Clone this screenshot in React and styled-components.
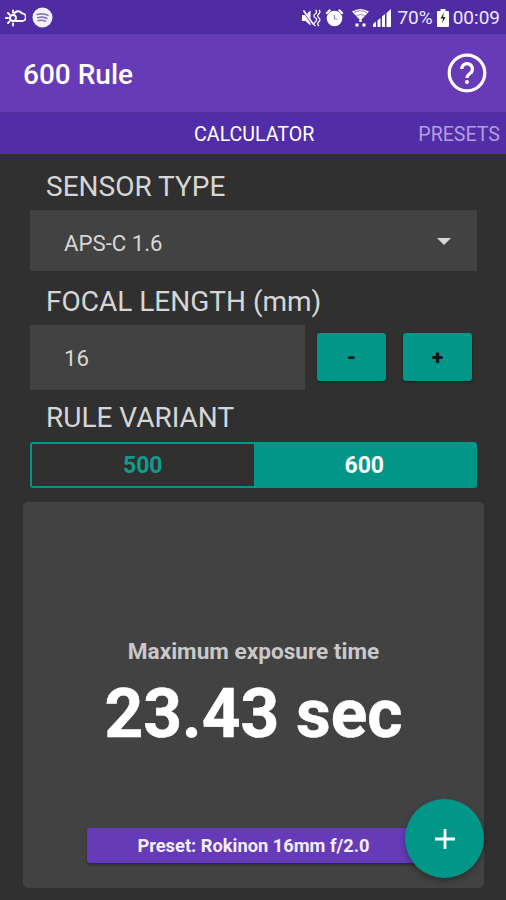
import React from "react";
import styled, { createGlobalStyle } from "styled-components";

const GlobalStyle = createGlobalStyle`
  html, body {
    margin: 0;
    padding: 0;
    background: #303030;
  }
  * {
    box-sizing: border-box;
  }
`;

const Screen = styled.div`
  width: 506px;
  height: 900px;
  overflow: hidden;
  display: flex;
  flex-direction: column;
  background: #303030;
  font-family: Roboto, "Liberation Sans", sans-serif;
`;

const StatusBar = styled.div`
  height: 34px;
  display: flex;
  align-items: center;
  justify-content: space-between;
  padding: 1px 6px 0 5px;
  background: #4f2ca3;
  color: #fff;
`;

const StatusGroup = styled.div`
  display: flex;
  align-items: center;
  gap: ${(p) => p.$gap || 4}px;
`;

const StatusText = styled.span`
  margin-left: ${(p) => p.$left || 0}px;
  font-size: 19px;
  line-height: 20px;
  color: #eee9f8;
`;

const Toolbar = styled.div`
  height: 79px;
  display: flex;
  align-items: center;
  justify-content: space-between;
  padding: 0 19px 0 23px;
  background: #673ab7;
  border-bottom: 1px solid #55309f;
`;

const AppTitle = styled.div`
  margin-top: 3px;
  color: #fff;
  font-size: 28px;
  font-weight: 500;
`;

const Tabs = styled.div`
  height: 41px;
  display: flex;
  align-items: center;
  justify-content: flex-end;
  gap: 104px;
  padding: 2px 6px 0 0;
  background: #512da8;
`;

const Tab = styled.div`
  font-size: 19.6px;
  font-weight: 400;
  color: ${(p) => (p.$active ? "#fff" : "#b39ddb")};
`;

const Content = styled.div`
  flex: 1;
  display: flex;
  flex-direction: column;
  padding: 0 22px 12px 23px;
  position: relative;
`;

const Form = styled.div`
  display: flex;
  flex-direction: column;
  padding: 0 7px;
`;

const FieldLabel = styled.div`
  height: ${(p) => p.$height}px;
  display: flex;
  align-items: center;
  padding: ${(p) => p.$top}px 0 0 16px;
  font-size: 28px;
  color: #d6d6d6;
`;

const SelectBox = styled.div`
  height: 61px;
  display: flex;
  align-items: center;
  justify-content: space-between;
  padding: 4px 26px 0 34px;
  background: #424242;
  color: #d6d6d6;
  font-size: 22.2px;
`;

const Caret = styled.div`
  width: 0;
  height: 0;
  margin-top: -3px;
  border-left: 7px solid transparent;
  border-right: 7px solid transparent;
  border-top: 7px solid #d8d8d8;
`;

const StepperRow = styled.div`
  display: flex;
  align-items: center;
`;

const NumberInput = styled.div`
  width: 275px;
  height: 65px;
  display: flex;
  align-items: center;
  padding: 1px 0 0 34px;
  background: #424242;
  color: #d6d6d6;
  font-size: 22.2px;
`;

const StepButton = styled.div`
  width: 69px;
  height: 48px;
  margin: 0 0 1px ${(p) => p.$gap}px;
  display: flex;
  align-items: center;
  justify-content: center;
  background: #009688;
  border-radius: 3px;
  box-shadow: 0 1px 2px rgba(0, 0, 0, 0.45);
  color: #111;
  font-size: 21px;
  font-weight: 900;
`;

const Toggle = styled.div`
  height: 46px;
  display: flex;
  border: 2px solid #009688;
  border-radius: 3px;
  font-size: 23px;
  font-weight: 700;
`;

const ToggleOption = styled.div`
  flex: 1;
  display: flex;
  align-items: center;
  justify-content: center;
  background: ${(p) => (p.$active ? "#009688" : "transparent")};
  color: ${(p) => (p.$active ? "#fff" : "#0f9c8e")};
`;

const ResultCard = styled.div`
  height: 386px;
  margin-top: 14px;
  display: flex;
  flex-direction: column;
  align-items: center;
  padding-top: 136px;
  background: #424242;
  border-radius: 5px;
`;

const ResultLabel = styled.div`
  height: 28px;
  line-height: 28px;
  color: #c9c9c9;
  font-size: 22.6px;
  font-weight: 700;
`;

const ResultValue = styled.div`
  height: 72px;
  margin-top: 12px;
  line-height: 72px;
  color: #fff;
  font-size: 67.6px;
  font-weight: 700;
  -webkit-text-stroke: 0.6px #fff;
`;

const PresetBadge = styled.div`
  width: 333px;
  height: 35px;
  margin-top: auto;
  margin-bottom: 25px;
  display: flex;
  align-items: center;
  justify-content: center;
  background: #673ab7;
  border-radius: 3px;
  box-shadow: 0 2px 3px rgba(0, 0, 0, 0.35);
  color: #f3effa;
  font-size: 18.3px;
  font-weight: 700;
`;

const Fab = styled.div`
  position: absolute;
  right: 22px;
  bottom: 22px;
  width: 79px;
  height: 79px;
  display: flex;
  align-items: center;
  justify-content: center;
  border-radius: 50%;
  background: #009688;
  box-shadow: 0 3px 6px rgba(0, 0, 0, 0.3);
`;

const WifiSlot = styled.span`
  display: flex;
  margin-left: 4px;
`;

function CloudSunIcon() {
  return (
    <svg width="21" height="18" viewBox="0 0 21 18" fill="none" stroke="#fff" strokeWidth="1.9">
      <path d="M9 5a4.5 4.5 0 0 1 8-.6 3.600 3.600 0 0 1 0 7.600H9.500" />
      <circle cx="8" cy="9" r="3" />
      <path d="M1 9h2M3 4l1.500 1.500M8 1.500v2M3 14l1.500-1.500M8 14.500v2" strokeLinecap="round" />
    </svg>
  );
}

function SpotifyIcon() {
  return (
    <svg width="21" height="21" viewBox="0 0 21 21">
      <circle cx="10.500" cy="10.500" r="10" fill="#f4f2fa" />
      <path d="M5 7.500c3.500-1 7.500-.8 11 .8M5.600 10.700c3-.8 6.300-.6 9.200.7M6.200 13.600c2.500-.6 5-.4 7.300.6" fill="none" stroke="#8a78bd" strokeWidth="1.700" strokeLinecap="round" />
    </svg>
  );
}

function MuteIcon() {
  return (
    <svg width="19" height="18" viewBox="0 0 19 18" fill="#fff">
      <path d="M0 6h3.500L8.500 1.500v15L3.500 12H0z" />
      <path d="M1 1l11 16" stroke="#4f2ca3" strokeWidth="2.400" />
      <path d="M1.500 1.500l10 14" stroke="#fff" strokeWidth="1.600" />
      <path d="M13.500 1q2.500 2-.3 4t.3 4q2.500 2-.3 4t.3 4M17 1q2 2-.3 4t.3 4q2 2-.3 4t.3 4" fill="none" stroke="#fff" strokeWidth="1.300" />
    </svg>
  );
}

function AlarmIcon() {
  return (
    <svg width="19" height="19" viewBox="0 0 19 19" fill="#fff">
      <circle cx="9.500" cy="10.500" r="7.800" />
      <path d="M.5 5l4-4 1.500 1.500-4 4zM18.500 5l-4-4-1.500 1.500 4 4z" />
      <path d="M9.500 7v4h3" fill="none" stroke="#9a88c8" strokeWidth="1.200" />
    </svg>
  );
}

function WifiIcon() {
  return (
    <svg width="17" height="19" viewBox="0 0 17 19" fill="#fff">
      <path d="M0 3.500Q8.500-1.500 17 3.500L10 11H7z" />
      <path d="M2 4.500Q8.500 1 15 4.500M4.500 7.500Q8.500 5.500 12.500 7.500" fill="none" stroke="#8a74bb" strokeWidth="0.900" />
      <circle cx="8.500" cy="12.500" r="1.500" />
      <path d="M3.500 15.500h3v3h-3zM10.500 15.500h3v3h-3z" />
    </svg>
  );
}

function SignalIcon() {
  return (
    <svg width="18" height="18" viewBox="0 0 18 18" fill="#fff">
      <path d="M0 15l3-2.500V18H0zM4.500 11.500L7.500 9v9h-3zM9 7.500L12 5v13H9zM13.500 4L18 0v18h-4.500z" />
    </svg>
  );
}

function BatteryIcon() {
  return (
    <svg width="12" height="18" viewBox="0 0 12 18">
      <path d="M3.500 0h5v2H11a1 1 0 0 1 1 1v14a1 1 0 0 1-1 1H1a1 1 0 0 1-1-1V3a1 1 0 0 1 1-1h2.500z" fill="#fff" />
      <path d="M7 3.500L3.500 9.500H6l-1 5 3.500-6.500H6z" fill="#222" />
    </svg>
  );
}

function HelpIcon() {
  return (
    <svg width="40" height="40" viewBox="0 0 40 40" fill="none" stroke="#fff" strokeWidth="3.200">
      <circle cx="20" cy="20" r="17.800" />
      <path d="M14.800 16a5.300 5.300 0 1 1 8.400 4.300c-2.100 1.500-3.200 2.300-3.200 4.700" />
      <circle cx="20" cy="29" r="2" fill="#fff" stroke="none" />
    </svg>
  );
}

function PlusIcon() {
  return (
    <svg width="22" height="22" viewBox="0 0 22 22" stroke="#fff" strokeWidth="2.800">
      <path d="M11 1v20M1 11h20" />
    </svg>
  );
}

export default function App() {
  return (
    <Screen>
      <GlobalStyle />
      <StatusBar>
        <StatusGroup $gap={6}>
          <CloudSunIcon />
          <SpotifyIcon />
        </StatusGroup>
        <StatusGroup>
          <MuteIcon />
          <AlarmIcon />
          <WifiSlot>
            <WifiIcon />
          </WifiSlot>
          <SignalIcon />
          <StatusText $left={2}>70%</StatusText>
          <BatteryIcon />
          <StatusText>00:09</StatusText>
        </StatusGroup>
      </StatusBar>
      <Toolbar>
        <AppTitle>600 Rule</AppTitle>
        <HelpIcon />
      </Toolbar>
      <Tabs>
        <Tab $active>CALCULATOR</Tab>
        <Tab>PRESETS</Tab>
      </Tabs>
      <Content>
        <Form>
          <FieldLabel $height={56} $top={8}>SENSOR TYPE</FieldLabel>
          <SelectBox>
            APS-C 1.6
            <Caret />
          </SelectBox>
          <FieldLabel $height={54} $top={6}>FOCAL LENGTH (mm)</FieldLabel>
          <StepperRow>
            <NumberInput>16</NumberInput>
            <StepButton $gap={12}>-</StepButton>
            <StepButton $gap={17}>+</StepButton>
          </StepperRow>
          <FieldLabel $height={52} $top={3}>RULE VARIANT</FieldLabel>
          <Toggle>
            <ToggleOption>500</ToggleOption>
            <ToggleOption $active>600</ToggleOption>
          </Toggle>
        </Form>
        <ResultCard>
          <ResultLabel>Maximum exposure time</ResultLabel>
          <ResultValue>23.43 sec</ResultValue>
          <PresetBadge>Preset: Rokinon 16mm f/2.0</PresetBadge>
        </ResultCard>
        <Fab>
          <PlusIcon />
        </Fab>
      </Content>
    </Screen>
  );
}
